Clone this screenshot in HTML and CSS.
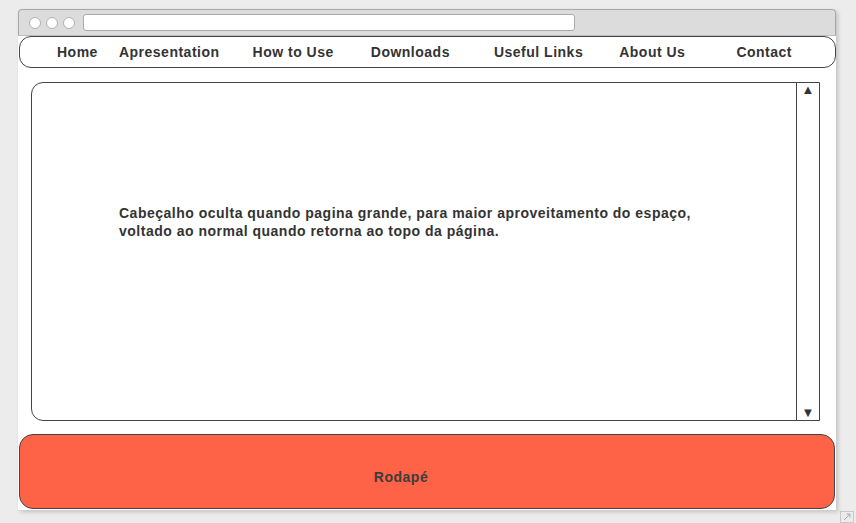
FILE: index.html
```html
<!DOCTYPE html>
<html>
<head>
<meta charset="utf-8">
<link rel="stylesheet" href="styles.css">
</head>
<body>
<div class="window">
  <div class="titlebar">
    <span class="dot"></span><span class="dot"></span><span class="dot"></span>
    <div class="address"></div>
  </div>
  <nav class="nav">
    <span class="item i1">Home</span>
    <span class="item i2">Apresentation</span>
    <span class="item i3">How to Use</span>
    <span class="item i4">Downloads</span>
    <span class="item i5">Useful Links</span>
    <span class="item i6">About Us</span>
    <span class="item i7">Contact</span>
  </nav>
  <div class="content">
    <div class="text">Cabeçalho oculta quando pagina grande, para maior aproveitamento do espaço,<br>voltado ao normal quando retorna ao topo da página.</div>
    <div class="scrollbar">
      <span class="arrow">&#9650;</span>
      <span class="arrow">&#9660;</span>
    </div>
  </div>
  <footer class="footer">Rodapé</footer>
</div>
<svg class="grip" width="14" height="12" viewBox="0 0 14 12">
  <rect x="0.5" y="0.5" width="13" height="11" fill="none" stroke="#c8c8c8"/>
  <path d="M4 9 L10 3 M6.5 3 H10 V6.5" fill="none" stroke="#aaa" stroke-width="1"/>
</svg>
</body>
</html>
```
FILE: styles.css
```css
html, body {
  margin: 0;
  padding: 0;
  background: #ececec;
  font-family: "Liberation Sans", Arial, sans-serif;
  color: #333;
  width: 856px;
  height: 523px;
  overflow: hidden;
  position: relative;
}
.window {
  margin: 9px 0 0 18px;
  width: 818px;
  height: 501px;
  background: #fff;
  box-shadow: 2px 2px 4px rgba(0,0,0,0.18);
  display: flex;
  flex-direction: column;
  border-radius: 4px 4px 0 0;
}
.titlebar {
  background: #dcdcdc;
  border: 1px solid #a8a8a8;
  border-bottom: 1px solid #bdbdbd;
  border-radius: 4px 4px 0 0;
  display: flex;
  align-items: center;
  padding-left: 10px;
  box-sizing: border-box;
  height: 27px;
}
.dot {
  border-radius: 50%;
  background: #fff;
  border: 1px solid #b0b0b0;
  margin-right: 5px;
  box-sizing: border-box;
  width: 12px;
  height: 12px;
}
.address {
  margin-left: 3px;
  width: 492px;
  height: 17px;
  background: #fff;
  border: 1px solid #aaa;
  border-radius: 3px;
  box-sizing: border-box;
}
.nav {
  margin: 0 0 0 1px;
  height: 32px;
  box-sizing: border-box;
  border: 1px solid #444;
  border-radius: 12px;
  display: flex;
  align-items: center;
  font-weight: bold;
  font-size: 14px;
  letter-spacing: 0.5px;
}
.item { white-space: nowrap; }
.i1 { margin-left: 37px; }
.i2 { margin-left: 21px; }
.i3 { margin-left: 33px; }
.i4 { margin-left: 37px; }
.i5 { margin-left: 44px; }
.i6 { margin-left: 36px; }
.i7 { margin-left: 51px; }
.content {
  margin: 14px 16px 0 13px;
  height: 339px;
  box-sizing: border-box;
  border: 1px solid #444;
  border-radius: 12px 0 0 12px;
  display: flex;
}
.text {
  flex: 1;
  padding: 121px 0 0 87px;
  font-weight: bold;
  font-size: 14px;
  letter-spacing: 0.5px;
  line-height: 18px;
  color: #333;
}
.scrollbar {
  width: 22px;
  border-left: 1px solid #444;
  display: flex;
  flex-direction: column;
  justify-content: space-between;
  align-items: center;
  font-size: 13px;
  color: #333;
  padding: 0;
}
.arrow { line-height: 14px; }
.footer {
  margin: 13px 1px 0 1px;
  height: 75px;
  box-sizing: border-box;
  background: #ff6347;
  border: 1px solid #444;
  border-radius: 14px;
  display: flex;
  align-items: center;
  justify-content: center;
  padding: 10px 52px 0 0;
  font-weight: bold;
  font-size: 14px;
  letter-spacing: 0.5px;
  color: #3d3d3d;
}
.grip {
  position: absolute;
  left: 840px;
  top: 511px;
}
```
